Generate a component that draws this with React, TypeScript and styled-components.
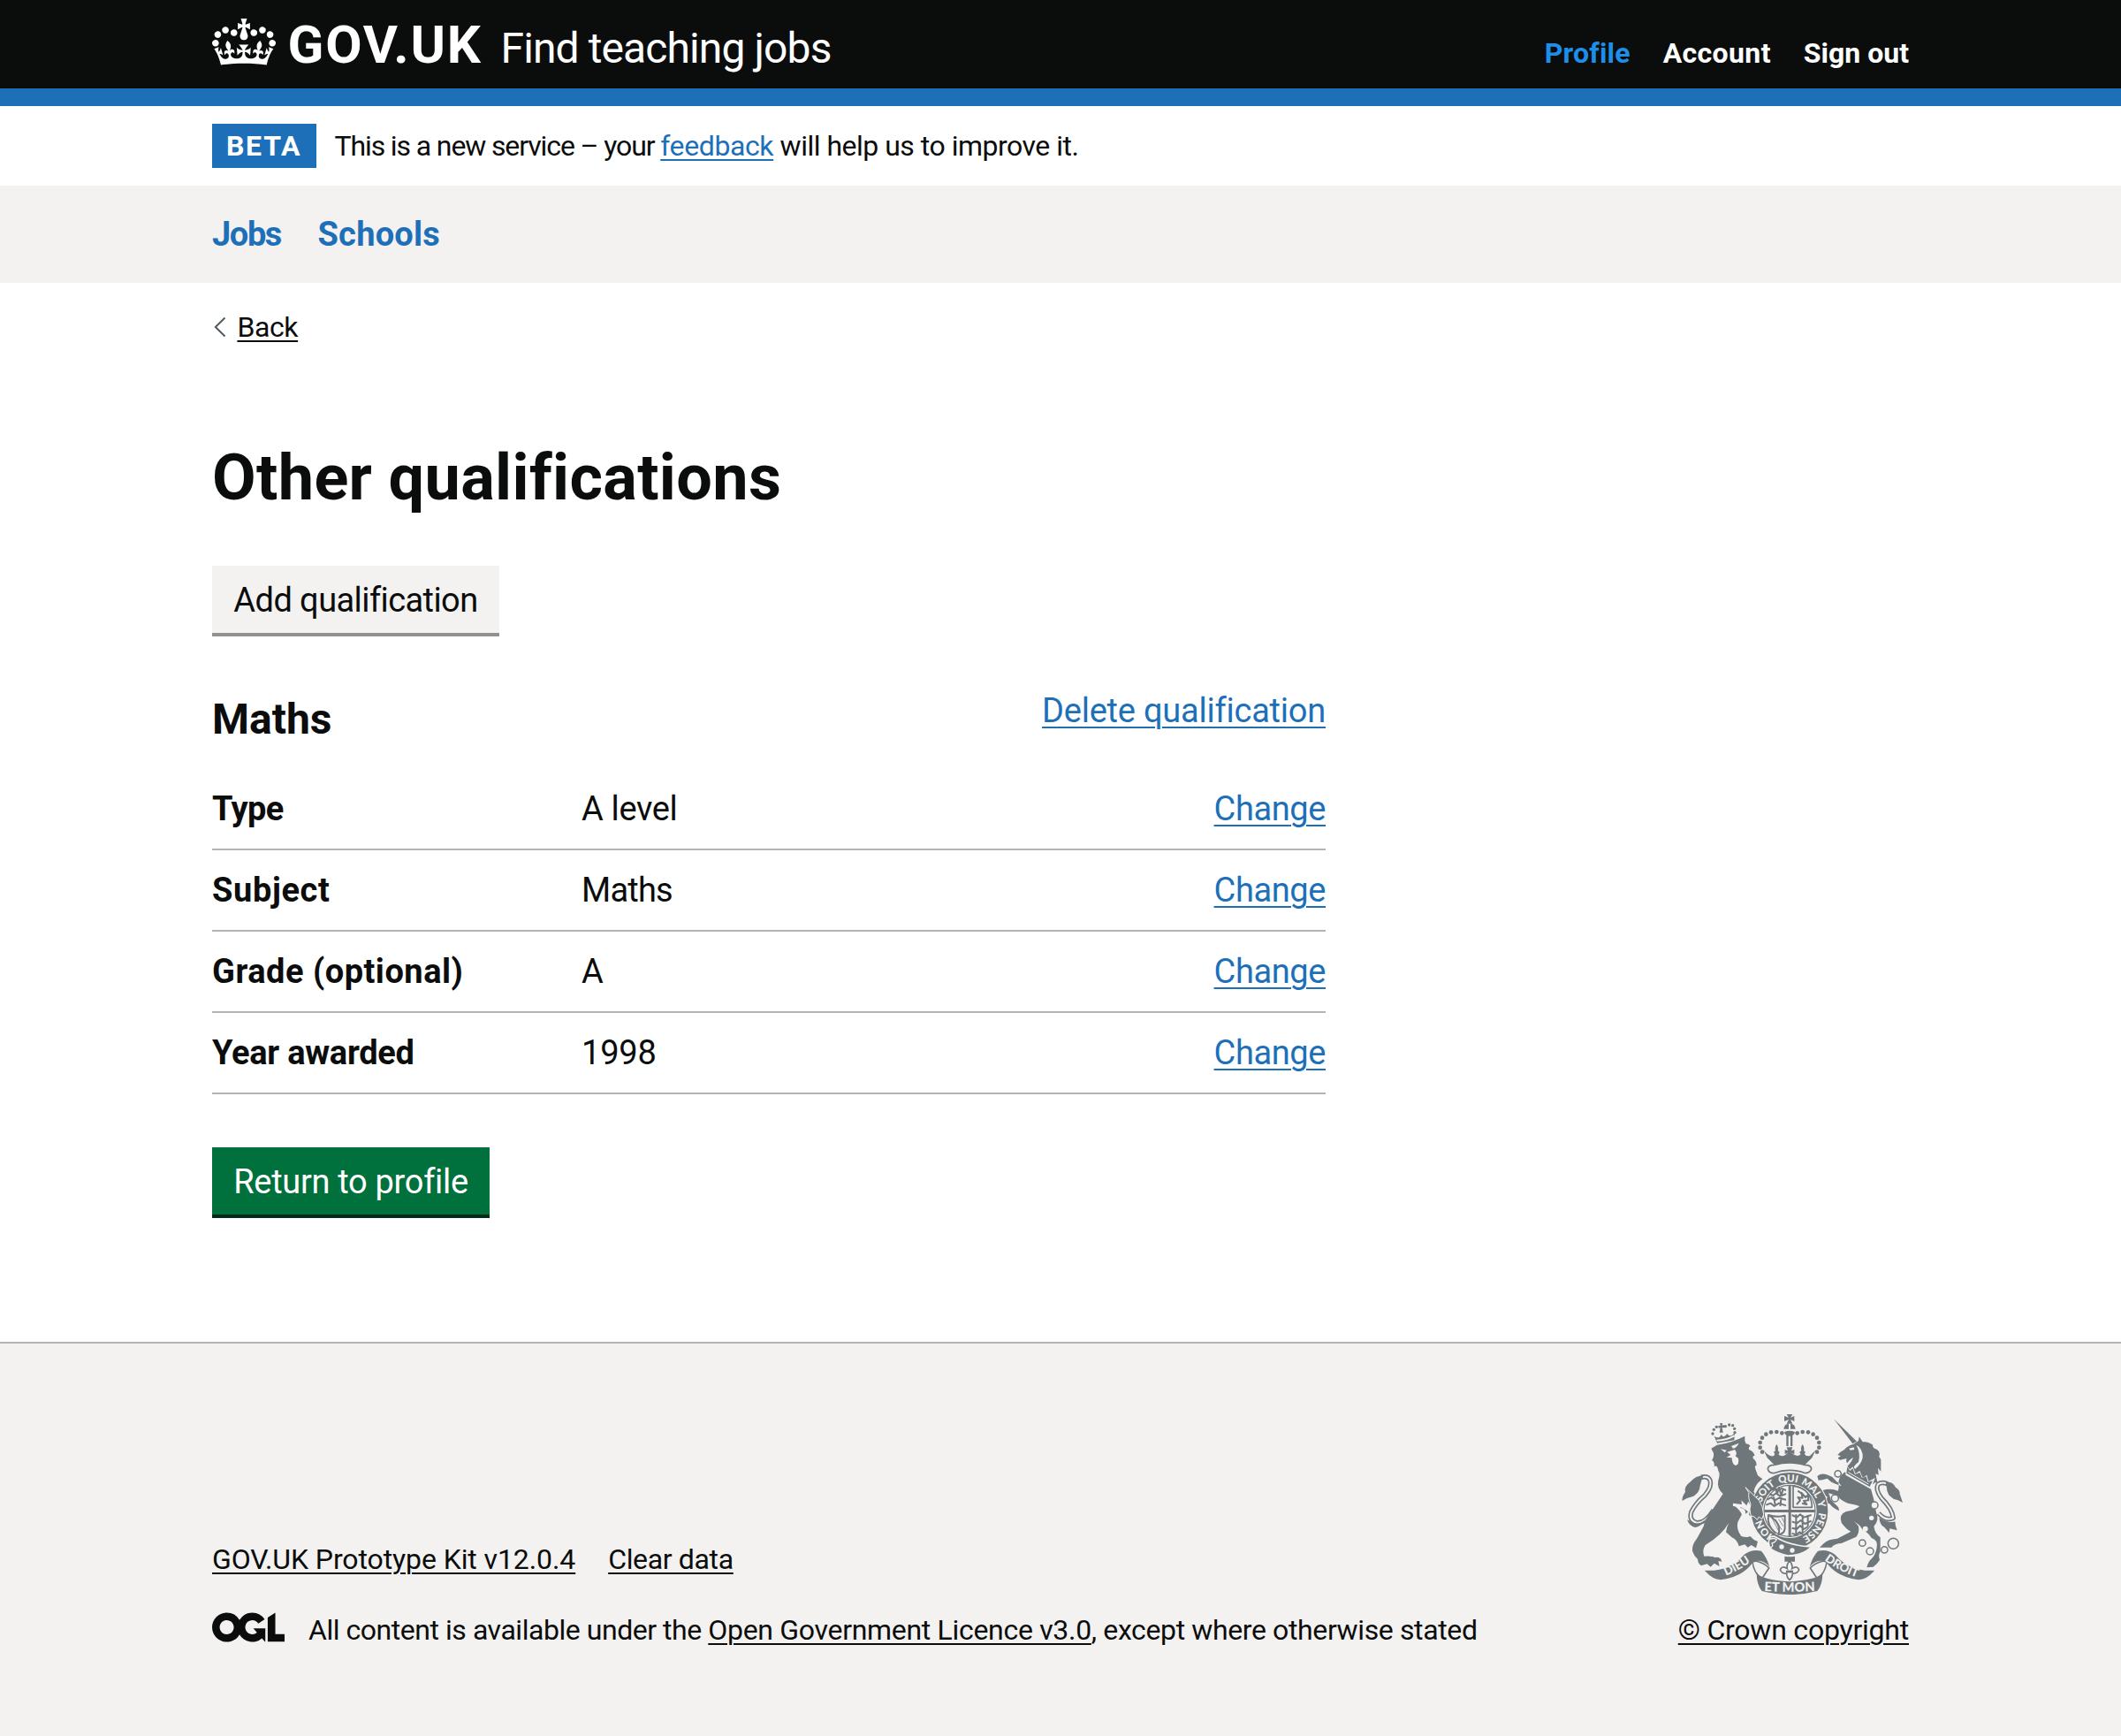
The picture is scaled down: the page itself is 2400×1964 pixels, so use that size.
import React from 'react';
import styled, { createGlobalStyle } from 'styled-components';

const color = {
  ink: '#0b0c0c',
  link: '#1d70b8',
  activeLink: '#1d8feb',
  panel: '#f3f2f1',
  border: '#b1b4b6',
  secondary: '#505a5f',
  green: '#00703c',
  greenShadow: '#002d18',
  greyShadow: '#929191',
  crest: '#6f777b',
};

const GlobalStyle = createGlobalStyle`
  *, *::before, *::after { box-sizing: border-box; }
  body {
    margin: 0;
    background: #fff;
    color: ${color.ink};
    font-family: Roboto, "Liberation Sans", Arial, sans-serif;
    font-size: 38px;
    line-height: 50px;
  }
  h1, h2, dl, dd, dt, p, ul { margin: 0; padding: 0; }
`;

const Page = styled.div`
  min-height: 1964px;
  display: flex;
  flex-direction: column;
`;

const Container = styled.div`
  width: 1920px;
  margin: 0 auto;
`;

const Link = styled.a<{ $ink?: boolean; $track?: number }>`
  color: ${(p) => (p.$ink ? color.ink : color.link)};
  letter-spacing: ${(p) => p.$track ?? 0}px;
  text-decoration: underline;
  text-decoration-thickness: 2px;
  text-underline-offset: 0.128em;
`;

const Track = styled.span<{ $track: number }>`
  letter-spacing: ${(p) => p.$track}px;
`;

/* Header */

const Header = styled.header`
  background: ${color.ink};
  border-bottom: 20px solid ${color.link};
  height: 120px;
`;

const HeaderRow = styled(Container)`
  display: flex;
  align-items: baseline;
  padding-top: 20.5px;
  color: #fff;
`;

const CrownIcon = styled.svg`
  align-self: flex-start;
  width: 72px;
  height: 53px;
  margin: 0.5px 13.6px 0 0;
  fill: currentColor;
`;

const LogoText = styled.span`
  font-size: 60px;
  line-height: 60px;
  font-weight: 700;
  letter-spacing: 1.74px;
`;

const ServiceName = styled.span`
  margin-left: 21px;
  font-size: 48px;
  line-height: 56px;
  letter-spacing: -0.9px;
`;

const HeaderNav = styled.nav`
  display: flex;
  gap: 37px;
  margin-left: auto;
  font-size: 32px;
  line-height: 40px;
  font-weight: 700;
`;

const HeaderLink = styled.a<{ $active?: boolean; $track: number }>`
  color: ${(p) => (p.$active ? color.activeLink : '#fff')};
  letter-spacing: ${(p) => p.$track}px;
`;

/* Phase banner and sub navigation */

const PhaseBanner = styled(Container)`
  display: flex;
  align-items: center;
  height: 90px;
  font-size: 32px;
  line-height: 40px;
`;

const PhaseTag = styled.strong`
  width: 118px;
  height: 50px;
  margin-right: 20.5px;
  padding: 5px 0 5px 16px;
  background: ${color.link};
  color: #fff;
  font-weight: 700;
  letter-spacing: 1.7px;
`;

const SubNav = styled.nav`
  background: ${color.panel};
`;

const SubNavList = styled(Container)`
  display: flex;
  gap: 41.5px;
  font-weight: 700;
  line-height: 110px;
`;

const SubNavLink = styled.a<{ $track: number }>`
  color: ${color.link};
  letter-spacing: ${(p) => p.$track}px;
`;

/* Main content */

const BackRow = styled(Container)`
  display: flex;
  align-items: center;
  padding-top: 30px;
  font-size: 32px;
  line-height: 40px;
`;

const Chevron = styled.svg`
  width: 16px;
  height: 24px;
  margin-right: 12.4px;
  fill: none;
  stroke: ${color.secondary};
  stroke-width: 2;
`;

const Main = styled(Container)`
  padding: 111px 0 140px;
`;

const TwoThirds = styled.div`
  width: 1260px;
`;

const Title = styled.h1`
  font-size: 72px;
  line-height: 80px;
  font-weight: 700;
  letter-spacing: 0.35px;
  margin-bottom: 59px;
`;

const Button = styled.button<{ $secondary?: boolean; $width: number; $track: number }>`
  display: block;
  width: ${(p) => p.$width}px;
  height: 80px;
  padding: 2px 0 0;
  border: 0;
  border-bottom: 4px solid ${(p) => (p.$secondary ? color.greyShadow : color.greenShadow)};
  background: ${(p) => (p.$secondary ? color.panel : color.green)};
  color: ${(p) => (p.$secondary ? color.ink : '#fff')};
  font: inherit;
  letter-spacing: ${(p) => p.$track}px;
  text-align: center;
`;

const CardHead = styled.div`
  display: flex;
  justify-content: space-between;
  align-items: flex-start;
  margin-top: 59px;
  height: 91px;
`;

const CardTitle = styled.h2`
  padding-top: 5px;
  font-size: 48px;
  line-height: 60px;
  font-weight: 700;
`;

const SummaryList = styled.dl`
  margin-bottom: 60px;
`;

const SummaryRow = styled.div`
  display: grid;
  grid-template-columns: 418px 1fr auto;
  padding: 20px 0;
  border-bottom: 2px solid ${color.border};
`;

const Key = styled.dt<{ $track: number }>`
  font-weight: 700;
  letter-spacing: ${(p) => p.$track}px;
`;

const Value = styled.dd<{ $track: number }>`
  letter-spacing: ${(p) => p.$track}px;
`;

/* Footer */

const Footer = styled.footer`
  flex: 1;
  border-top: 2px solid ${color.border};
  background: ${color.panel};
  font-size: 32px;
  line-height: 40px;
`;

const FooterRow = styled(Container)`
  display: flex;
  justify-content: space-between;
  align-items: flex-end;
  padding: 80px 0 100px;
`;

const FooterLinks = styled.div`
  display: flex;
  gap: 37px;
  margin-bottom: 40px;
`;

const Licence = styled.div`
  display: flex;
  align-items: flex-start;
`;

const OglLogo = styled.svg`
  width: 82px;
  height: 34px;
  margin-right: 27px;
`;

const Copyright = styled.div`
  display: flex;
  flex-direction: column;
  align-items: center;
`;

const CrestIcon = styled.svg`
  width: 250px;
  height: 204px;
  margin: 0 2px 20px 0;
`;

function Crown() {
  return (
    <CrownIcon viewBox="0 0 132 97" aria-hidden="true">
      <path
        fillRule="evenodd"
        d="M25 30.2c3.5 1.5 7.7-.2 9.1-3.7 1.5-3.6-.2-7.8-3.9-9.2-3.6-1.4-7.6.3-9.1 3.9-1.4 3.5.3 7.5 3.9 9zM9 39.5c3.6 1.5 7.8-.2 9.2-3.7 1.5-3.6-.2-7.8-3.9-9.1-3.6-1.5-7.6.2-9.1 3.8-1.4 3.5.3 7.5 3.8 9zM4.4 57.2c3.5 1.5 7.7-.2 9.1-3.8 1.5-3.6-.2-7.7-3.9-9.1-3.5-1.5-7.6.3-9.1 3.8-1.4 3.5.3 7.6 3.9 9.1zm38.3-21.4c3.5 1.5 7.7-.2 9.1-3.8 1.5-3.6-.2-7.7-3.9-9.1-3.6-1.5-7.6.3-9.1 3.8-1.3 3.6.4 7.7 3.9 9.1zm64.4-5.6c-3.6 1.5-7.8-.2-9.1-3.7-1.5-3.6.2-7.8 3.8-9.2 3.6-1.4 7.7.3 9.2 3.9 1.3 3.5-.4 7.5-3.9 9zm15.9 9.3c-3.6 1.5-7.7-.2-9.1-3.7-1.5-3.6.2-7.8 3.7-9.1 3.6-1.5 7.7.2 9.2 3.8 1.5 3.5-.3 7.5-3.8 9zm4.7 17.7c-3.6 1.5-7.8-.2-9.2-3.8-1.5-3.6.2-7.7 3.9-9.1 3.6-1.5 7.7.3 9.2 3.8 1.3 3.5-.4 7.6-3.9 9.1zM89.3 35.8c-3.6 1.5-7.8-.2-9.2-3.8-1.4-3.6.2-7.7 3.9-9.1 3.6-1.5 7.7.3 9.2 3.8 1.4 3.6-.3 7.7-3.9 9.1zM69.7 17.7l8.9 4.7V9.3l-8.9 2.8c-.2-.3-.5-.6-.9-.9L72.4 0H59.6l3.5 11.2c-.3.3-.6.5-.9.9l-8.8-2.8v13.1l8.8-4.7c.3.3.6.7.9.9l-5 15.4v.1c-.2.8-.4 1.6-.4 2.4 0 4.1 3.1 7.5 7 8.1h.2c.3 0 .7.1 1 .1.4 0 .7 0 1-.1h.2c4-.6 7.1-4.1 7.1-8.1 0-.8-.1-1.7-.4-2.4V34l-5.1-15.4c.4-.2.7-.6 1-.9zM66 92.8c16.9 0 32.8 1.1 47.1 3.2 4-16.9 8.9-26.7 14-33.5l-9.6-3.4c1 4.9 1.1 7.2 0 10.2-1.5-1.4-3-4.3-4.2-8.7L108.6 76c2.8-2 5-3.2 7.5-3.3-4.4 9.4-10 11.9-13.6 11.2-4.3-.8-6.3-4.6-5.6-7.9 1-4.7 5.7-5.9 8-.5 4.3-8.7-3-11.4-7.6-8.8 7.1-7.2 7.9-13.5 2.1-21.1-8 6.1-8.1 12.3-4.5 20.8-4.7-5.4-12.1-2.5-9.5 6.2 3.4-5.2 7.9-2 7.2 3.1-.6 4.3-6.4 7.8-13.5 7.2-10.3-.9-10.9-8-11.2-13.8 2.5-.5 7.1 1.8 11 7.3L80.2 60c-4.1 4.4-8 5.3-12.3 5.4 1.4-4.4 8-11.6 8-11.6H55.5s6.4 7.2 7.9 11.6c-4.2-.1-8-1-12.3-5.4l1.4 16.4c3.9-5.5 8.5-7.7 10.9-7.3-.3 5.8-.9 12.8-11.1 13.8-7.2.6-12.9-2.9-13.5-7.2-.7-5 3.8-8.3 7.1-3.1 2.7-8.7-4.6-11.6-9.4-6.2 3.7-8.5 3.6-14.7-4.6-20.8-5.8 7.6-5 13.9 2.2 21.1-4.7-2.6-11.9.1-7.7 8.8 2.3-5.5 7.1-4.2 8.1.5.7 3.3-1.3 7.1-5.7 7.9-3.5.7-9-1.8-13.5-11.2 2.5.1 4.7 1.3 7.5 3.3l-4.7-15.4c-1.2 4.4-2.7 7.2-4.3 8.7-1.1-3-.9-5.3 0-10.2l-9.5 3.4c5 6.9 9.9 16.7 14 33.5 14.8-2.1 30.8-3.2 47.7-3.2z"
      />
    </CrownIcon>
  );
}

const crownBeads = [
  [412, 124], [394, 120], [375, 121], [358, 128], [345, 140], [338, 156], [338, 173], [345, 188],
];

const lionCrownBeads = [
  [177, 126], [181, 112], [190, 103], [220, 101], [233, 96], [245, 98], [251, 109], [252, 122],
];

const motto: [string, number][] = [
  ['HON', 86], ['SOIT', 222], ['QUI', 306], ['MAL', 386], ['Y', 444], ['PENSE', 524],
];

const bezants = [
  [602, 262, 11], [592, 345, 12], [726, 369, 12], [685, 497, 11], [711, 525, 12], [760, 520, 11], [790, 499, 18],
];

const leftTail = 'M180 385Q150 432 122 428Q96 420 104 392Q118 362 150 335Q176 305 168 284Q160 268 138 274';
const rightTail = 'M740 396Q765 424 790 412Q786 380 750 345Q728 315 738 298Q750 288 770 296';

function Crest() {
  const g = color.crest;
  const bg = color.panel;
  return (
    <CrestIcon viewBox="72 60 750 612" fill={g} aria-hidden="true">
      <defs>
        <path id="garter" d="M438 487A99 99 0 0 1 438 289A99 99 0 0 1 438 487" />
        <path id="ribbonLeft" d="M200 616Q262 596 324 548" />
        <path id="ribbonMid" d="M330 659Q438 666 546 659" />
        <path id="ribbonRight" d="M546 548Q608 596 678 617" />
      </defs>

      {/* tails */}
      <g fill="none" strokeLinejoin="round">
        <path d={leftTail} stroke={g} strokeWidth="16" />
        <path d={leftTail} stroke={bg} strokeWidth="6" />
        <path d={rightTail} stroke={g} strokeWidth="16" />
        <path d={rightTail} stroke={bg} strokeWidth="6" />
      </g>
      <path d="M146 268Q120 268 100 290Q78 306 84 324Q74 336 73 354Q92 342 112 338Q132 326 134 304Q138 284 146 268z" />
      <path d="M90 418Q98 440 118 444Q140 440 156 414Q136 434 116 430z" />
      <path d="M764 290Q786 286 798 308Q814 318 812 330L822 360Q806 350 792 348Q768 334 768 312z" />
      <path d="M742 410Q744 436 760 444L776 462L778 448L803 454Q796 440 796 424Q776 432 742 410z" />

      {/* lion */}
      <g>
        <path d="M192 158L182 134Q200 146 206 128Q214 144 226 126Q236 142 252 122L250 148z" />
        {lionCrownBeads.map(([x, y]) => (
          <circle key={`${x}-${y}`} cx={x} cy={y} r="5" />
        ))}
        <path d="M202 90L210 90L209 98L216 97L216 106L209 105L212 122L200 122L203 106L197 107L196 99L203 99z" />
        <path d="M190 146Q222 146 250 130L252 136Q222 152 191 152z" fill={bg} />
        <path d="M172 176L192 164Q240 158 286 134Q284 150 290 160Q300 160 305 168Q298 170 300 180Q314 184 320 200Q312 200 314 210Q326 218 326 234Q318 232 322 246L330 268L346 280Q328 292 320 310L316 324Q336 338 342 356L350 392Q346 412 332 418Q324 406 318 416Q308 406 300 402L302 388L288 398Q290 378 272 378Q264 362 244 366Q268 382 276 400L262 426Q256 450 274 474Q294 480 304 474Q314 486 330 492L324 514L308 504L296 512L286 502L266 508Q262 488 242 478L222 460Q224 444 232 428Q208 470 152 504Q140 522 148 542Q174 540 184 546Q204 542 208 560L196 558L200 576L182 566L170 578L158 568L138 574Q126 566 126 552Q114 542 108 524Q106 504 122 484Q130 470 146 440Q152 410 176 384L212 330Q190 310 196 284Q204 262 196 252Q192 230 182 238Q184 220 174 216Q182 206 180 192z" />
        <path d="M204 178L224 182L218 190zM240 168L266 158Q258 174 246 176z" fill={bg} />
        <path d="M226 188L252 180Q262 192 254 202L264 210Q268 232 254 234Q242 228 242 208L224 206L238 198z" fill={bg} />
        <path d="M246 362L276 366L274 352L292 370L298 356L308 374L300 396Q284 372 246 372z" fill={bg} />
      </g>

      {/* unicorn */}
      <g>
        <path d="M588 76L666 152L652 160z" />
        <path d="M601 198Q608 188 624 180Q636 166 654 162L672 150L674 136L686 154Q706 152 722 166Q716 168 726 176Q744 180 744 198Q738 200 748 214L748 254L738 242L740 266L730 262L736 292Q728 288 722 298L668 268L632 238Q648 224 654 206Q640 214 634 226Q628 220 632 210L616 214Q606 218 602 208L612 202z" />
        <path d="M640 176L656 172L658 180L644 182zM664 164Q688 176 686 208Q680 232 660 246Q650 238 672 222Q680 190 664 164z" fill={bg} />
        <path d="M626 256Q606 270 604 290L614 304Q604 300 594 296L580 290L566 278Q548 284 536 284L532 270Q544 260 562 264L582 272L594 284Q598 290 604 292Q606 316 602 320Q578 310 550 318L538 308Q540 330 554 334L566 340Q564 354 558 360L574 364Q584 378 606 388Q606 374 596 368L578 350Q576 340 570 328L600 336Q612 354 636 362Q668 368 676 372Q656 388 630 390Q604 400 614 428Q630 450 646 458L600 482Q566 484 552 500L540 512L580 512Q592 498 614 498L664 476Q676 462 672 440Q660 424 648 420Q676 432 686 452Q706 462 716 480Q738 486 734 512Q730 536 718 548Q704 560 700 580L722 578Q736 568 744 554Q738 540 746 526L746 478Q728 466 724 440Q744 420 732 392Q726 350 712 306Q664 292 626 256z" />
        <path d="M630 228L628 266L714 314L728 276L706 288L700 266L686 276L676 252L662 262L652 238L642 248z" fill={bg} />
        <path d="M631 260L634 238L643 252L652 244L660 264L676 258L684 277L698 271L704 290L720 286L710 306z" />
        <path d="M637 257L706 297" stroke={bg} strokeWidth="3" />
        <circle cx="716" cy="412" r="8" fill={bg} />
        <circle cx="695" cy="449" r="9" fill={bg} />
        {bezants.map(([x, y, r]) => (
          <circle key={`${x}-${y}`} cx={x} cy={y} r={r} fill={bg} stroke={g} strokeWidth="4.5" />
        ))}
      </g>

      {/* garter and shield */}
      <circle cx="438" cy="388" r="133" fill={bg} />
      <circle cx="438" cy="388" r="111" fill="none" stroke={g} strokeWidth="38" />
      <circle cx="438" cy="388" r="87" fill={bg} stroke={g} strokeWidth="3.5" />
      <path d="M434 300h9v176h-9zM352 384h172v9H352z" />
      <g fill="none" stroke={g} strokeWidth="6" strokeLinejoin="round">
        <path d="M378 318l10-6 10 8 12-8 16 6M370 330l12 6 10-8 14 10 20-8M362 350l14-8 12 10 14-8 24 6M358 368l16-6 12 10 16-10 24 8M388 308l8 22 6-20 8 26 6-24M384 340l6 32M410 342l-4 30" />
        <path d="M446 402l16 8 12-10 12 10 26-8M446 424l16 6 14-10 14 12 22-10M446 446l16 4 12-12 12 12 14-8M446 464l14 6 12-10 12 8M460 400v68M482 402v60M500 402v40" />
        <path d="M450 308V376H514Q514 340 490 318Q470 304 450 304z" strokeWidth="5" />
        <path d="M462 366l12-14-8-10 16 2-4-18 14 16 8-8 2 18-16 2 10 12-16-4M466 320l14 10" />
        <path d="M366 402Q396 412 422 404V448Q420 466 400 468Q412 430 366 402Q360 436 390 464" />
      </g>
      <path d="M378 412L404 462M390 416L411 452M401 416L416 440M412 412L419 426" stroke={g} strokeWidth="2.5" />
      <g fill={bg} fontFamily='Lato, "Liberation Sans", sans-serif' fontWeight="900" fontSize="34" textAnchor="middle">
        {motto.map(([word, offset]) => (
          <text key={word}>
            <textPath href="#garter" startOffset={offset}>{word}</textPath>
          </text>
        ))}
      </g>

      {/* lion's paw over the garter */}
      <path d="M288 308L334 352Q348 372 350 400L344 416L334 408L328 418L318 408L306 404Q300 380 306 366Q296 340 300 326z" stroke={bg} strokeWidth="3" />

      {/* buckle and strap */}
      <path d="M372 478Q384 470 396 480Q440 506 512 510Q480 540 432 540Q396 532 376 518Q360 500 372 478z" stroke={bg} strokeWidth="5" />
      <path d="M372 484Q386 478 394 486Q390 494 378 498Q384 508 374 512" fill="none" stroke={bg} strokeWidth="4" />
      <circle cx="411" cy="510" r="8" fill={bg} />
      <circle cx="447" cy="522" r="8" fill={bg} />

      {/* imperial crown */}
      <path d="M386 232L362 208L350 182Q362 198 376 202Q386 204 388 194Q380 188 390 184Q386 172 394 162Q402 172 398 184Q408 188 400 196Q410 206 424 198L432 190L422 196V180L432 184L428 172H448L444 184L454 180V196L444 190Q462 208 476 196Q468 188 478 184Q474 172 482 162Q490 172 486 184Q496 188 488 194Q496 206 508 200L526 182L514 208L490 232Q438 218 386 232z" />
      <path d="M386 232Q364 232 364 246Q368 260 384 260Q438 240 492 260Q508 258 512 246Q512 232 490 232Q438 218 386 232z" fill={bg} stroke={g} strokeWidth="5" />
      {crownBeads.map(([x, y]) => (
        <React.Fragment key={`${x}-${y}`}>
          <circle cx={x} cy={y} r="7" />
          <circle cx={876 - x} cy={y} r="7" />
        </React.Fragment>
      ))}
      <path d="M427 132h7v36h-7zM441 132h7v36h-7zM420 120Q438 112 456 120Q454 134 438 134Q422 134 420 120z" />
      <path d="M418 110Q420 92 435 92V110zM441 92Q456 92 458 110H441z" />
      <path d="M428 60H448L441 71L454 66V84L441 78L448 92H428L435 78L420 84V66L435 71z" />

      {/* pendant */}
      <path d="M421 542Q438 546 456 542V560H421z" />
      <path d="M438 558Q450 570 446 584Q464 572 470 588Q464 602 448 600Q448 614 438 622Q428 614 428 600Q412 602 406 588Q412 572 430 584Q426 570 438 558z" fill={bg} stroke={g} strokeWidth="5" />
      <path d="M426 590H450V598H426z" />

      {/* ribbons */}
      <g>
        <path d="M312 562Q318 602 344 618L368 582Q352 564 322 558z" fill={bg} stroke={g} strokeWidth="5" />
        <path d="M564 562Q558 602 532 618L508 582Q524 564 554 558z" fill={bg} stroke={g} strokeWidth="5" />
        <path d="M150 590Q232 596 284 536Q310 516 342 524Q360 544 370 578Q344 548 314 562Q280 612 204 622Q174 620 150 590z" />
        <path d="M726 590Q644 596 592 536Q566 516 534 524Q516 544 506 578Q532 548 562 562Q596 612 672 622Q702 620 726 590z" />
        <path d="M326 598Q342 622 438 628Q534 622 550 598Q550 640 532 660Q438 684 344 660Q326 640 326 598z" />
      </g>
      <g fill={bg} fontFamily='Lato, "Liberation Sans", sans-serif' fontWeight="900" fontSize="40" textAnchor="middle">
        <text>
          <textPath href="#ribbonLeft" startOffset="50%">DIEU</textPath>
        </text>
        <text fontSize="44">
          <textPath href="#ribbonMid" startOffset="50%">ET MON</textPath>
        </text>
        <text>
          <textPath href="#ribbonRight" startOffset="50%">DROIT</textPath>
        </text>
      </g>
    </CrestIcon>
  );
}

const rows = [
  { key: 'Type', keyTrack: -0.6, value: 'A level', valueTrack: -0.36 },
  { key: 'Subject', keyTrack: 0.62, value: 'Maths', valueTrack: -0.8 },
  { key: 'Grade (optional)', keyTrack: 0.5, value: 'A', valueTrack: 0 },
  { key: 'Year awarded', keyTrack: -0.28, value: '1998', valueTrack: -0.2 },
];

export default function App() {
  return (
    <Page>
      <GlobalStyle />
      <Header>
        <HeaderRow>
          <Crown />
          <LogoText>GOV.UK</LogoText>
          <ServiceName>Find teaching jobs</ServiceName>
          <HeaderNav>
            <HeaderLink $active $track={0.18}>Profile</HeaderLink>
            <HeaderLink $track={0.37}>Account</HeaderLink>
            <HeaderLink $track={0}>Sign out</HeaderLink>
          </HeaderNav>
        </HeaderRow>
      </Header>

      <PhaseBanner>
        <PhaseTag>BETA</PhaseTag>
        <p>
          <Track $track={-1.12}>This is a new service – your </Track>
          <Link $track={-0.4}>feedback</Link>
          <Track $track={-0.5}> will help us to improve it.</Track>
        </p>
      </PhaseBanner>

      <SubNav>
        <SubNavList>
          <SubNavLink $track={-1.4}>Jobs</SubNavLink>
          <SubNavLink $track={0.23}>Schools</SubNavLink>
        </SubNavList>
      </SubNav>

      <BackRow>
        <Chevron viewBox="0 0 16 24">
          <path d="M14.5 1.5L3.8 12l10.7 10.5" />
        </Chevron>
        <Link $ink $track={-0.4}>Back</Link>
      </BackRow>

      <Main as="main">
        <TwoThirds>
          <Title>Other qualifications</Title>
          <Button $secondary $width={325} $track={-0.58}>Add qualification</Button>
          <CardHead>
            <CardTitle>Maths</CardTitle>
            <Link $track={-0.23}>Delete qualification</Link>
          </CardHead>
          <SummaryList>
            {rows.map((r) => (
              <SummaryRow key={r.key}>
                <Key $track={r.keyTrack}>{r.key}</Key>
                <Value $track={r.valueTrack}>{r.value}</Value>
                <dd>
                  <Link $track={-0.4}>Change</Link>
                </dd>
              </SummaryRow>
            ))}
          </SummaryList>
          <Button $width={314} $track={-0.3}>Return to profile</Button>
        </TwoThirds>
      </Main>

      <Footer>
        <FooterRow>
          <div>
            <FooterLinks>
              <Link $ink $track={-0.1}>GOV.UK Prototype Kit v12.0.4</Link>
              <Link $ink $track={-0.35}>Clear data</Link>
            </FooterLinks>
            <Licence>
              <OglLogo viewBox="0 0 483.2 195.7" aria-hidden="true">
                <path
                  fill={color.ink}
                  d="M421.5 142.8V.1l-50.7 32.3v161.1h112.4v-50.7zm-122.3-9.6A47.12 47.12 0 0 1 221 97.8c0-26 21.1-47.1 47.1-47.1 16.7 0 31.4 8.7 39.7 21.8l42.7-27.2A97.63 97.63 0 0 0 268.1 0c-36.5 0-68.3 20.1-85.1 49.7A98 98 0 0 0 97.8 0C43.9 0 0 43.9 0 97.8s43.9 97.8 97.8 97.8c36.5 0 68.3-20.1 85.1-49.7a97.76 97.76 0 0 0 149.6 25.4l19.4 22.2h3v-87.8h-80l24.3 27.5zM97.8 145c-26 0-47.1-21.1-47.1-47.1s21.1-47.1 47.1-47.1 47.1 21.1 47.1 47.1S123.8 145 97.8 145"
                />
              </OglLogo>
              <p>
                <Track $track={-0.46}>All content is available under the </Track>
                <Link $ink $track={-0.31}>Open Government Licence v3.0</Link>
                <Track $track={-0.38}>, except where otherwise stated</Track>
              </p>
            </Licence>
          </div>
          <Copyright>
            <Crest />
            <Link $ink $track={-0.22}>© Crown copyright</Link>
          </Copyright>
        </FooterRow>
      </Footer>
    </Page>
  );
}
